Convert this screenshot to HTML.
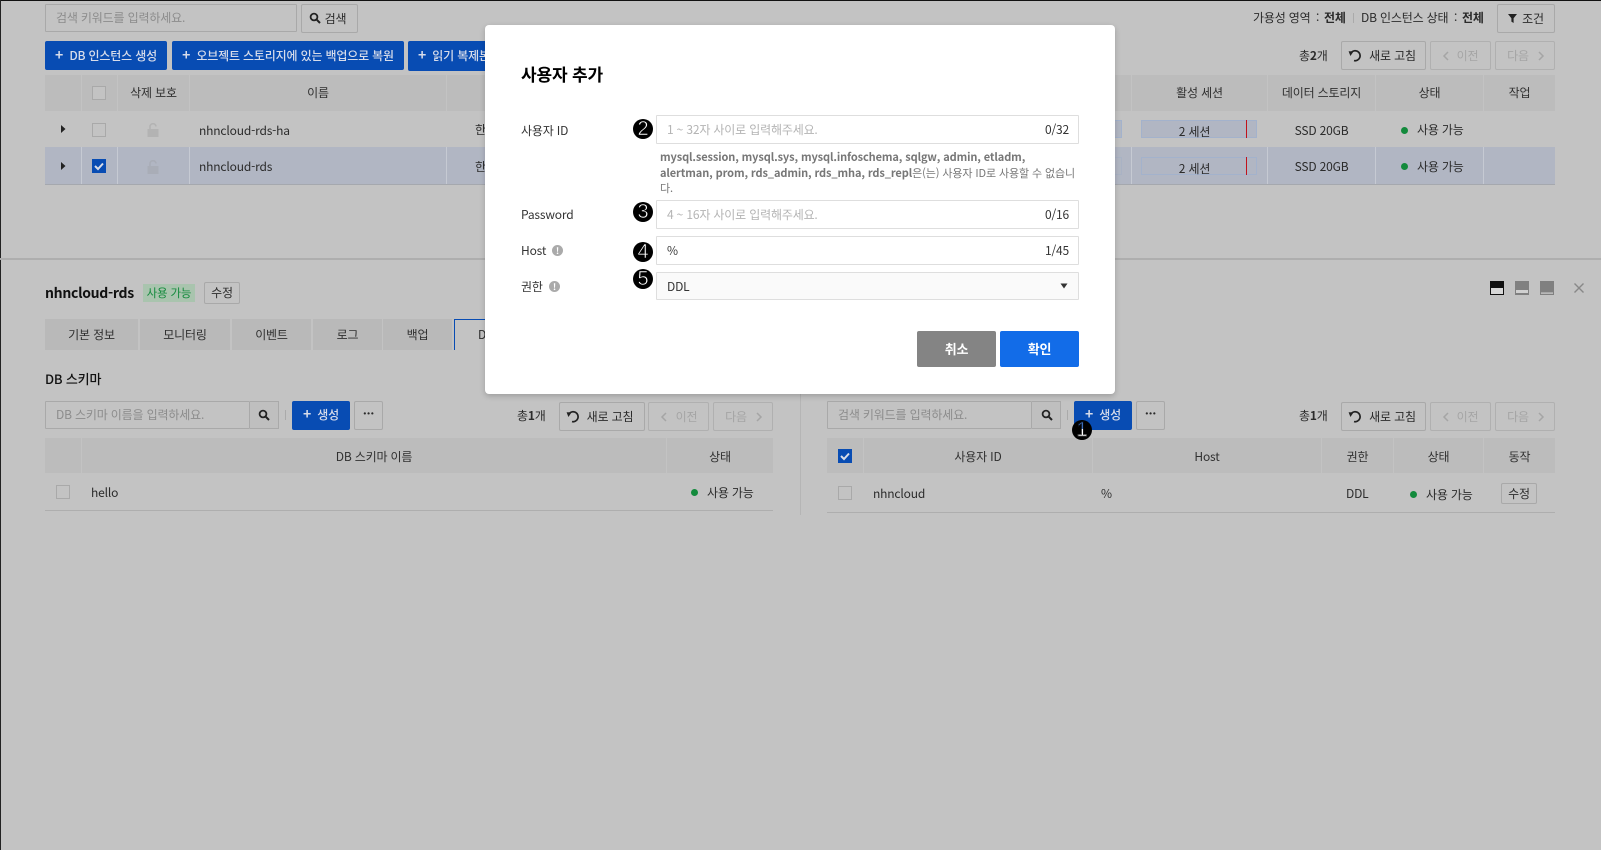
<!DOCTYPE html>
<html lang="ko"><head><meta charset="utf-8"><title>사용자 추가</title>
<style>
*{box-sizing:border-box}
html,body{margin:0;padding:0;width:1601px;height:850px;overflow:hidden;background:#c3c3c3}
body{font-family:"Noto Sans CJK KR","Liberation Sans",sans-serif;font-size:12px;letter-spacing:-.17px;color:#2b2b2b;position:relative}
.a{position:absolute;white-space:nowrap}
.t{position:absolute;white-space:nowrap;text-align:center}
.b{position:absolute;border:1px solid #a9a9a9;border-radius:2px;background:#c3c3c3;text-align:center;white-space:nowrap}
.d{color:#a5a5a5;border-color:#b0b0b0}
.p{position:absolute;background:#084cb3;color:#d7dcea;border-radius:2px;font-weight:500;text-align:center;white-space:nowrap}
.p b{font-size:14px;font-weight:700;margin-right:3px;line-height:1}
.i{position:absolute;border:1px solid #a9a9a9;border-radius:1px;background:#c3c3c3;color:#8c8c8c;padding-left:10px;white-space:nowrap}
.h{position:absolute;background:#bcbcbc;text-align:center;white-space:nowrap;color:#303030}
.c{position:absolute;width:14px;height:14px;border:1px solid #a9a9a9;background:#c3c3c3}
.k{position:absolute;width:14px;height:14px;background:#084cb3}
.dot{position:absolute;width:7px;height:7px;border-radius:50%;background:#138a3c}
.tab{position:absolute;top:319px;height:31px;line-height:31px;background:#b9b9b9;text-align:center;color:#2f2f2f}
.m-i{position:absolute;left:656px;width:423px;height:29px;border:1px solid #dedede;border-radius:1px;background:#fff;line-height:28px;padding-left:10px;color:#b4b4b4;white-space:nowrap}
.m-c{position:absolute;right:9px;top:0;color:#333}
.n{position:absolute;left:633px;width:20px;height:20px;border-radius:50%;background:#000;color:#fff;font-family:"Liberation Sans",sans-serif;font-size:20px;letter-spacing:0;line-height:20px;text-align:center;-webkit-text-stroke:.6px #000}
.l{position:absolute;left:521px;color:#333;white-space:nowrap}
svg{position:absolute;display:block}
</style></head><body>

<!-- window edges -->
<div class="a" style="left:0;top:0;width:1601px;height:1px;background:#111"></div>
<div class="a" style="left:0;top:0;width:1px;height:850px;background:#222"></div>

<!-- top toolbar -->
<div class="i" style="left:45px;top:4px;width:252px;height:28px;line-height:26px">검색 키워드를 입력하세요.</div>
<div class="b" style="left:301px;top:4px;width:57px;height:29px;line-height:27px;padding-left:12px">검색</div>
<svg style="left:309px;top:12px" width="12" height="12" viewBox="0 0 12 12"><circle cx="5" cy="5" r="3.4" fill="none" stroke="#222" stroke-width="1.8"/><path d="M7.6 7.6L11 11" stroke="#222" stroke-width="2"/></svg>

<div class="a" style="left:1253px;top:9px;line-height:18px">가용성 영역</div>
<div class="a" style="left:1316px;top:9px;line-height:18px">:</div>
<div class="a" style="left:1324px;top:9px;line-height:18px"><b>전체</b></div>
<div class="a" style="left:1353px;top:13px;width:1px;height:10px;background:#aaa"></div>
<div class="a" style="left:1361px;top:9px;line-height:18px">DB 인스턴스 상태</div>
<div class="a" style="left:1454px;top:9px;line-height:18px">:</div>
<div class="a" style="left:1462px;top:9px;line-height:18px"><b>전체</b></div>
<div class="b" style="left:1497px;top:4px;width:58px;height:29px;line-height:27px;padding-left:14px">조건</div>
<svg style="left:1507px;top:13px" width="11" height="11" viewBox="0 0 11 11"><path d="M1 1H10L6.6 5.2V10L4.4 8.6V5.2Z" fill="#222"/></svg>

<div class="p" style="left:45px;top:41px;width:122px;height:29px;line-height:29px"><b>+</b> DB 인스턴스 생성</div>
<div class="p" style="left:172px;top:41px;width:232px;height:29px;line-height:29px"><b>+</b> 오브젝트 스토리지에 있는 백업으로 복원</div>
<div class="p" style="left:408px;top:41px;width:140px;height:30px;line-height:29px;text-align:left;padding-left:10px"><b>+</b> 읽기 복제본 생성</div>

<div class="a" style="left:1299px;top:47px;line-height:18px">총<b>2</b>개</div>
<div class="b" style="left:1341px;top:41px;width:85px;height:29px;line-height:27px;padding-left:18px">새로 고침</div>
<svg style="left:1348px;top:49px" width="14" height="14" viewBox="0 0 14 14"><path d="M3.2 3.6A5 5 0 1 1 6 11.6" fill="none" stroke="#222" stroke-width="1.7"/><path d="M0.6 2.2L5.6 2.4L2.4 7Z" fill="#222"/></svg>
<div class="b d" style="left:1430px;top:41px;width:61px;height:29px;line-height:27px;padding-left:14px">이전</div>
<svg style="left:1442px;top:51px" width="8" height="10" viewBox="0 0 8 10"><path d="M6 1L2 5L6 9" fill="none" stroke="#a5a5a5" stroke-width="1.5"/></svg>
<div class="b d" style="left:1495px;top:41px;width:60px;height:29px;line-height:27px;padding-right:14px">다음</div>
<svg style="left:1537px;top:51px" width="8" height="10" viewBox="0 0 8 10"><path d="M2 1L6 5L2 9" fill="none" stroke="#a5a5a5" stroke-width="1.5"/></svg>

<!-- top table -->
<div class="a" style="left:45px;top:147px;width:1510px;height:37px;background:#b1b6c3"></div>
<div class="a" style="left:45px;top:184px;width:1510px;height:1px;background:#a5a8ae"></div>
<div class="h" style="left:45px;top:75px;width:36px;height:36px"></div>
<div class="h" style="left:82px;top:75px;width:35px;height:36px"></div>
<div class="h" style="left:118px;top:75px;width:71px;height:36px;line-height:36px">삭제 보호</div>
<div class="h" style="left:190px;top:75px;width:256px;height:36px;line-height:36px">이름</div>
<div class="h" style="left:447px;top:75px;width:684px;height:36px"></div>
<div class="h" style="left:1132px;top:75px;width:135px;height:36px;line-height:36px">활성 세션</div>
<div class="h" style="left:1268px;top:75px;width:107px;height:36px;line-height:36px">데이터 스토리지</div>
<div class="h" style="left:1376px;top:75px;width:107px;height:36px;line-height:36px">상태</div>
<div class="h" style="left:1484px;top:75px;width:71px;height:36px;line-height:36px">작업</div>
<div class="a" style="left:81px;top:147px;width:1px;height:37px;background:#c6cad3"></div>
<div class="a" style="left:117px;top:147px;width:1px;height:37px;background:#c6cad3"></div>
<div class="a" style="left:189px;top:147px;width:1px;height:37px;background:#c6cad3"></div>
<div class="a" style="left:446px;top:147px;width:1px;height:37px;background:#c6cad3"></div>
<div class="a" style="left:1131px;top:147px;width:1px;height:37px;background:#c6cad3"></div>
<div class="a" style="left:1267px;top:147px;width:1px;height:37px;background:#c6cad3"></div>
<div class="a" style="left:1375px;top:147px;width:1px;height:37px;background:#c6cad3"></div>
<div class="a" style="left:1483px;top:147px;width:1px;height:37px;background:#c6cad3"></div>

<div class="c" style="left:92px;top:86px"></div>
<div class="c" style="left:92px;top:123px"></div>
<div class="k" style="left:92px;top:159px"></div>
<svg style="left:92px;top:159px" width="14" height="14" viewBox="0 0 14 14"><path d="M3 7L6 10L11 4.5" fill="none" stroke="#d9dde8" stroke-width="2"/></svg>
<svg style="left:60px;top:125px" width="6" height="8" viewBox="0 0 6 8"><path d="M1 0L5.5 4L1 8Z" fill="#222"/></svg>
<svg style="left:60px;top:162px" width="6" height="8" viewBox="0 0 6 8"><path d="M1 0L5.5 4L1 8Z" fill="#222"/></svg>
<svg style="left:147px;top:123px" width="12" height="14" viewBox="0 0 12 14"><path d="M3 6V4A3 3 0 0 1 9 3.4" fill="none" stroke="#b3b3b3" stroke-width="1.6"/><rect x="0.5" y="6" width="11" height="8" fill="#b3b3b3"/></svg>
<svg style="left:147px;top:160px" width="12" height="14" viewBox="0 0 12 14"><path d="M3 6V4A3 3 0 0 1 9 3.4" fill="none" stroke="#a9adb7" stroke-width="1.6"/><rect x="0.5" y="6" width="11" height="8" fill="#a9adb7"/></svg>

<div class="a" style="left:199px;top:121px;line-height:20px">nhncloud-rds-ha</div>
<div class="a" style="left:199px;top:157px;line-height:20px">nhncloud-rds</div>
<div class="a" style="left:475px;top:120px;line-height:20px">한</div>
<div class="a" style="left:475px;top:157px;line-height:20px">한</div>

<div class="a" style="left:1100px;top:120px;width:22px;height:18px;background:#b1b6c3;border:1px solid #a3b2cc"></div>
<div class="a" style="left:1100px;top:157px;width:22px;height:18px;border:1px solid #a9b2c4"></div>
<div class="a" style="left:1141px;top:120px;width:116px;height:18px;background:#b1b6c3;border:1px solid #a3b2cc"></div>
<div class="a" style="left:1141px;top:157px;width:116px;height:18px;border:1px solid #a3b2cc"></div>
<div class="a" style="left:1246px;top:120px;width:1px;height:18px;background:#c1121c"></div>
<div class="a" style="left:1246px;top:157px;width:1px;height:18px;background:#c1121c"></div>
<div class="t" style="left:1141px;top:122px;width:107px;line-height:20px">2 세션</div>
<div class="t" style="left:1141px;top:159px;width:107px;line-height:20px">2 세션</div>
<div class="t" style="left:1268px;top:121px;width:107px;line-height:20px">SSD 20GB</div>
<div class="t" style="left:1268px;top:157px;width:107px;line-height:20px">SSD 20GB</div>
<div class="dot" style="left:1401px;top:127px"></div>
<div class="dot" style="left:1401px;top:163px"></div>
<div class="a" style="left:1417px;top:120px;line-height:20px">사용 가능</div>
<div class="a" style="left:1417px;top:157px;line-height:20px">사용 가능</div>

<!-- divider -->
<div class="a" style="left:0;top:258px;width:1601px;height:2px;background:#aeaeae"></div>

<!-- detail header -->
<div class="a" style="left:45px;top:282px;font-size:14px;font-weight:700;letter-spacing:-.3px;line-height:22px;color:#111">nhncloud-rds</div>
<div class="a" style="left:143px;top:284px;width:52px;height:18px;background:#a9c4ae;color:#138a3c;text-align:center;line-height:18px;font-size:11.5px">사용 가능</div>
<div class="b" style="left:204px;top:282px;width:36px;height:22px;line-height:20px">수정</div>

<svg style="left:1490px;top:281px" width="14" height="14" viewBox="0 0 14 14"><rect width="14" height="14" fill="#111"/><rect x="1" y="7" width="12" height="6" fill="#d8d8d8"/></svg>
<svg style="left:1515px;top:281px" width="14" height="14" viewBox="0 0 14 14"><rect width="14" height="14" fill="#808080"/><rect x="1" y="9" width="12" height="3" fill="#d0d0d0"/></svg>
<svg style="left:1540px;top:281px" width="14" height="14" viewBox="0 0 14 14"><rect width="14" height="14" fill="#808080"/><rect x="1" y="11.5" width="12" height="1.2" fill="#d0d0d0"/></svg>
<svg style="left:1574px;top:283px" width="10" height="10" viewBox="0 0 10 10"><path d="M0.5 0.5L9.5 9.5M9.5 0.5L0.5 9.5" stroke="#888" stroke-width="1.4"/></svg>

<!-- tabs -->
<div class="tab" style="left:45px;width:93px">기본 정보</div>
<div class="tab" style="left:140px;width:90px">모니터링</div>
<div class="tab" style="left:232px;width:79px">이벤트</div>
<div class="tab" style="left:313px;width:69px">로그</div>
<div class="tab" style="left:383px;width:69px">백업</div>
<div class="a" style="left:454px;top:319px;width:40px;height:31px;border-left:1px solid #084cb3;border-top:1px solid #084cb3;line-height:30px;padding-left:23px">D</div>

<!-- left panel -->
<div class="a" style="left:45px;top:368px;font-size:13px;font-weight:500;line-height:22px;color:#111">DB 스키마</div>
<div class="i" style="left:45px;top:401px;width:205px;height:28px;line-height:26px">DB 스키마 이름을 입력하세요.</div>
<div class="a" style="left:250px;top:401px;width:29px;height:28px;border:1px solid #a9a9a9;border-left:0;background:#bfbfbf"></div>
<svg style="left:258px;top:409px" width="12" height="12" viewBox="0 0 12 12"><circle cx="5" cy="5" r="3.4" fill="none" stroke="#222" stroke-width="1.8"/><path d="M7.6 7.6L11 11" stroke="#222" stroke-width="2"/></svg>
<div class="a" style="left:285px;top:410px;width:1px;height:10px;background:#aaa"></div>
<div class="p" style="left:292px;top:401px;width:58px;height:29px;line-height:28px"><b>+</b> 생성</div>
<div class="b" style="left:354px;top:401px;width:29px;height:29px;line-height:24px;font-weight:700">···</div>
<div class="a" style="left:517px;top:407px;line-height:18px">총<b>1</b>개</div>
<div class="b" style="left:559px;top:402px;width:86px;height:29px;line-height:27px;padding-left:16px">새로 고침</div>
<svg style="left:566px;top:410px" width="14" height="14" viewBox="0 0 14 14"><path d="M3.2 3.6A5 5 0 1 1 6 11.6" fill="none" stroke="#222" stroke-width="1.7"/><path d="M0.6 2.2L5.6 2.4L2.4 7Z" fill="#222"/></svg>
<div class="b d" style="left:648px;top:402px;width:61px;height:29px;line-height:27px;padding-left:16px">이전</div>
<svg style="left:660px;top:412px" width="8" height="10" viewBox="0 0 8 10"><path d="M6 1L2 5L6 9" fill="none" stroke="#a5a5a5" stroke-width="1.5"/></svg>
<div class="b d" style="left:713px;top:402px;width:60px;height:29px;line-height:27px;padding-right:14px">다음</div>
<svg style="left:755px;top:412px" width="8" height="10" viewBox="0 0 8 10"><path d="M2 1L6 5L2 9" fill="none" stroke="#a5a5a5" stroke-width="1.5"/></svg>

<div class="h" style="left:45px;top:438px;width:36px;height:35px"></div>
<div class="h" style="left:82px;top:438px;width:584px;height:35px;line-height:37px">DB 스키마 이름</div>
<div class="h" style="left:667px;top:438px;width:106px;height:35px;line-height:37px">상태</div>
<div class="c" style="left:56px;top:485px"></div>
<div class="a" style="left:91px;top:483px;line-height:20px">hello</div>
<div class="dot" style="left:691px;top:489px"></div>
<div class="a" style="left:707px;top:483px;line-height:20px">사용 가능</div>
<div class="a" style="left:45px;top:510px;width:728px;height:1px;background:#aeaeae"></div>

<div class="a" style="left:800px;top:394px;width:1px;height:121px;background:#b5b5b5"></div>

<!-- right panel -->
<div class="i" style="left:827px;top:401px;width:205px;height:28px;line-height:26px">검색 키워드를 입력하세요.</div>
<div class="a" style="left:1032px;top:401px;width:29px;height:28px;border:1px solid #a9a9a9;border-left:0;background:#bfbfbf"></div>
<svg style="left:1041px;top:409px" width="12" height="12" viewBox="0 0 12 12"><circle cx="5" cy="5" r="3.4" fill="none" stroke="#222" stroke-width="1.8"/><path d="M7.6 7.6L11 11" stroke="#222" stroke-width="2"/></svg>
<div class="a" style="left:1067px;top:410px;width:1px;height:10px;background:#aaa"></div>
<div class="p" style="left:1074px;top:401px;width:58px;height:29px;line-height:28px"><b>+</b> 생성</div>
<div class="b" style="left:1136px;top:401px;width:29px;height:29px;line-height:24px;font-weight:700">···</div>
<div class="a" style="left:1299px;top:407px;line-height:18px">총<b>1</b>개</div>
<div class="b" style="left:1341px;top:402px;width:85px;height:29px;line-height:27px;padding-left:18px">새로 고침</div>
<svg style="left:1348px;top:410px" width="14" height="14" viewBox="0 0 14 14"><path d="M3.2 3.6A5 5 0 1 1 6 11.6" fill="none" stroke="#222" stroke-width="1.7"/><path d="M0.6 2.2L5.6 2.4L2.4 7Z" fill="#222"/></svg>
<div class="b d" style="left:1430px;top:402px;width:61px;height:29px;line-height:27px;padding-left:14px">이전</div>
<svg style="left:1442px;top:412px" width="8" height="10" viewBox="0 0 8 10"><path d="M6 1L2 5L6 9" fill="none" stroke="#a5a5a5" stroke-width="1.5"/></svg>
<div class="b d" style="left:1495px;top:402px;width:60px;height:29px;line-height:27px;padding-right:14px">다음</div>
<svg style="left:1537px;top:412px" width="8" height="10" viewBox="0 0 8 10"><path d="M2 1L6 5L2 9" fill="none" stroke="#a5a5a5" stroke-width="1.5"/></svg>

<div class="h" style="left:827px;top:438px;width:36px;height:35px"></div>
<div class="k" style="left:838px;top:449px"></div>
<svg style="left:838px;top:449px" width="14" height="14" viewBox="0 0 14 14"><path d="M3 7L6 10L11 4.5" fill="none" stroke="#d9dde8" stroke-width="2"/></svg>
<div class="h" style="left:864px;top:438px;width:228px;height:35px;line-height:37px">사용자 ID</div>
<div class="h" style="left:1093px;top:438px;width:228px;height:35px;line-height:37px">Host</div>
<div class="h" style="left:1322px;top:438px;width:71px;height:35px;line-height:37px">권한</div>
<div class="h" style="left:1394px;top:438px;width:89px;height:35px;line-height:37px">상태</div>
<div class="h" style="left:1484px;top:438px;width:71px;height:35px;line-height:37px">동작</div>
<div class="c" style="left:838px;top:486px"></div>
<div class="a" style="left:873px;top:484px;line-height:20px">nhncloud</div>
<div class="a" style="left:1101px;top:484px;line-height:20px">%</div>
<div class="a" style="left:1346px;top:484px;line-height:20px">DDL</div>
<div class="dot" style="left:1410px;top:491px"></div>
<div class="a" style="left:1426px;top:485px;line-height:20px">사용 가능</div>
<div class="b" style="left:1501px;top:483px;width:36px;height:21px;line-height:19px">수정</div>
<div class="a" style="left:827px;top:512px;width:728px;height:1px;background:#aeaeae"></div>

<div class="n" style="left:1072px;top:420px"><span style="color:transparent;background:linear-gradient(#3c6db8 0,#3c6db8 45%,#fff 45%);-webkit-background-clip:text;background-clip:text">1</span></div>

<!-- modal -->
<div class="a" style="left:485px;top:25px;width:630px;height:369px;background:#fff;border-radius:4px;box-shadow:0 2px 6px rgba(0,0,0,.2)"></div>
<div class="a" style="left:521px;top:60px;font-size:17px;font-weight:700;line-height:28px;color:#000">사용자 추가</div>

<div class="l" style="top:121px;line-height:20px">사용자 ID</div>
<div class="m-i" style="top:115px">1 ~ 32자 사이로 입력해주세요.<span class="m-c">0/32</span></div>
<div class="a" style="left:660px;top:150px;line-height:15.7px;color:#777;font-size:11px;letter-spacing:-.1px"><b>mysql.session, mysql.sys, mysql.infoschema, sqlgw, admin, etladm,</b><br><b>alertman, prom, rds_admin, rds_mha, rds_repl</b>은(는) 사용자 ID로 사용할 수 없습니<br>다.</div>

<div class="l" style="top:205px;line-height:20px">Password</div>
<div class="m-i" style="top:200px">4 ~ 16자 사이로 입력해주세요.<span class="m-c">0/16</span></div>

<div class="l" style="top:241px;line-height:20px">Host</div>
<div class="a" style="left:552px;top:245px;width:11px;height:11px;border-radius:50%;background:#aaa;color:#fff;font-size:9px;line-height:11px;text-align:center;font-weight:700">!</div>
<div class="m-i" style="top:236px;color:#333">%<span class="m-c">1/45</span></div>

<div class="l" style="top:277px;line-height:20px">권한</div>
<div class="a" style="left:549px;top:281px;width:11px;height:11px;border-radius:50%;background:#aaa;color:#fff;font-size:9px;line-height:11px;text-align:center;font-weight:700">!</div>
<div class="m-i" style="top:272px;height:28px;background:#fafafa;color:#333">DDL</div>
<svg style="left:1060px;top:283px" width="8" height="6" viewBox="0 0 8 6"><path d="M0.5 0.5H7.5L4 5.5Z" fill="#333"/></svg>

<div class="n" style="top:119px">2</div>
<div class="n" style="top:202px">3</div>
<div class="n" style="top:242px">4</div>
<div class="n" style="top:269px">5</div>

<div class="a" style="left:917px;top:331px;width:79px;height:36px;background:#848484;color:#fff;border-radius:2px;font-weight:700;text-align:center;line-height:35px;font-size:13px">취소</div>
<div class="a" style="left:1000px;top:331px;width:79px;height:36px;background:#126ce8;color:#fff;border-radius:2px;font-weight:700;text-align:center;line-height:35px;font-size:13px">확인</div>

</body></html>
